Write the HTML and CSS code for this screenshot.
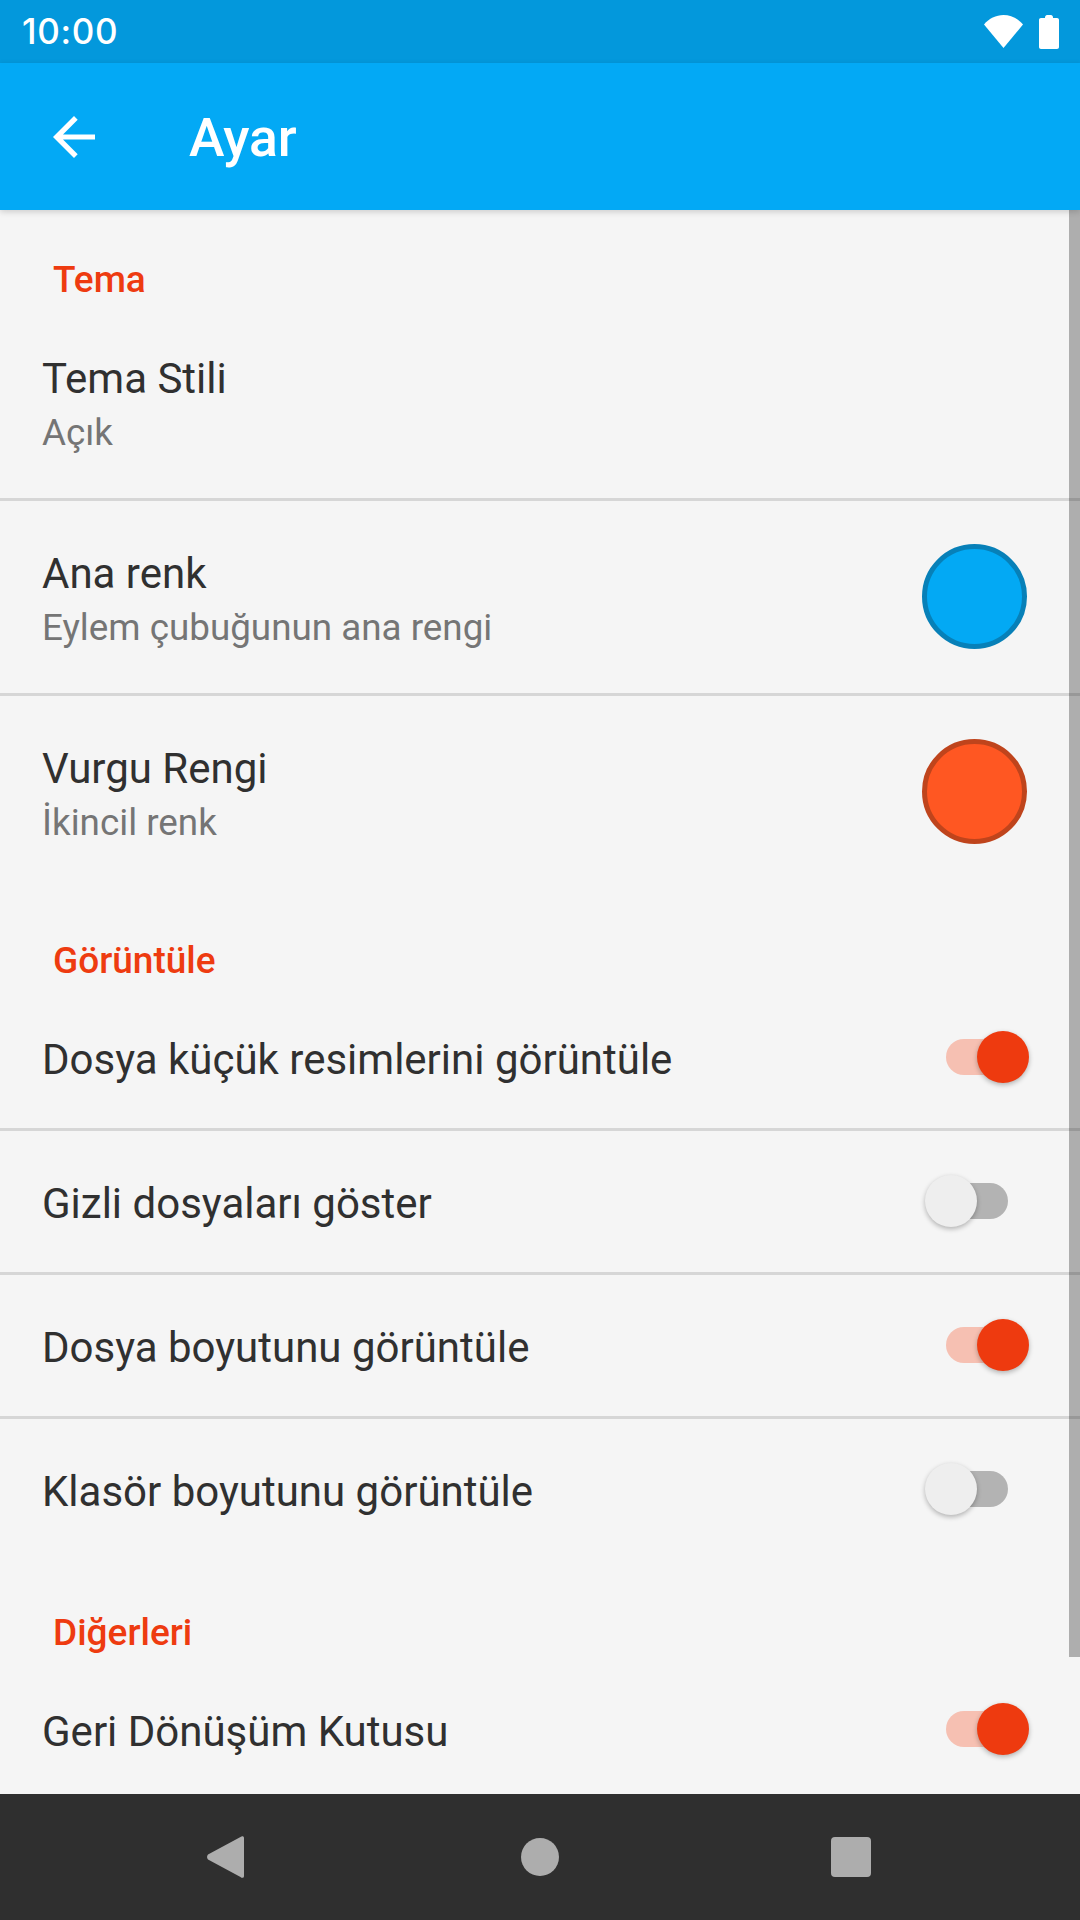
FILE: index.html
```html
<!DOCTYPE html>
<html lang="tr">
<head>
<meta charset="utf-8">
<title>Ayar</title>
<link rel="stylesheet" href="styles.css">
</head>
<body>
<div class="screen">
  <header class="status-bar">
    <span class="time">10:00</span>
    <div class="status-icons">
      <svg class="wifi" viewBox="0 0 39 33"><path d="M0 9.500C5 3.500 12 0 19.500 0S34 3.500 39 9.500L19.500 33Z"/></svg>
      <svg class="battery" viewBox="0 0 20 34"><path d="M6 2.500C6 1 7 0 8 0h4c1 0 2 1 2 2.500V3h4c1.200 0 2 .8 2 2v27c0 1.200-.8 2-2 2H2c-1.200 0-2-.8-2-2V5c0-1.200.8-2 2-2h4Z"/></svg>
    </div>
  </header>
  <div class="toolbar">
    <svg class="back-arrow" viewBox="0 0 42 42"><path d="M42 18.400H10L24.700 3.700 21 0 0 21l21 21 3.700-3.700L10 23.600h32Z"/></svg>
    <h1 class="title">Ayar</h1>
  </div>
  <main class="content">
    <h2 class="category">Tema</h2>
    <div class="row row-tall divided">
      <div class="texts"><div class="row-title">Tema Stili</div><div class="row-summary">Açık</div></div>
    </div>
    <div class="row row-tall divided">
      <div class="texts"><div class="row-title">Ana renk</div><div class="row-summary">Eylem çubuğunun ana rengi</div></div>
      <span class="swatch swatch-blue"></span>
    </div>
    <div class="row row-tall">
      <div class="texts"><div class="row-title">Vurgu Rengi</div><div class="row-summary">İkincil renk</div></div>
      <span class="swatch swatch-orange"></span>
    </div>

    <h2 class="category">Görüntüle</h2>
    <div class="row divided">
      <div class="row-title">Dosya küçük resimlerini görüntüle</div>
      <span class="switch on"><span class="track"></span><span class="thumb"></span></span>
    </div>
    <div class="row divided">
      <div class="row-title">Gizli dosyaları göster</div>
      <span class="switch"><span class="track"></span><span class="thumb"></span></span>
    </div>
    <div class="row divided">
      <div class="row-title">Dosya boyutunu görüntüle</div>
      <span class="switch on"><span class="track"></span><span class="thumb"></span></span>
    </div>
    <div class="row">
      <div class="row-title">Klasör boyutunu görüntüle</div>
      <span class="switch"><span class="track"></span><span class="thumb"></span></span>
    </div>

    <h2 class="category">Diğerleri</h2>
    <div class="row">
      <div class="row-title">Geri Dönüşüm Kutusu</div>
      <span class="switch on"><span class="track"></span><span class="thumb"></span></span>
    </div>
    <div class="scrollbar"></div>
  </main>
  <nav class="nav-bar">
    <svg class="nav-back" viewBox="0 0 37 42"><path d="M33.500 1C35 -.5 37 0 37 2v38c0 2-2 2.500-3.500 1L1 23.500c-1.300-1.500-1.300-3.500 0-5Z"/></svg>
    <span class="nav-home"></span>
    <span class="nav-recent"></span>
  </nav>
</div>
</body>
</html>
```

FILE: styles.css
```css
* { box-sizing: border-box; }
html, body { margin: 0; padding: 0; }
body { font-family: Roboto, "Noto Sans", sans-serif; background: #f5f5f5; }
.screen { width: 1080px; height: 1920px; display: flex; flex-direction: column; overflow: hidden; }

.status-bar { height: 63px; flex: none; background: #0398dc; color: #fff; display: flex; align-items: center; justify-content: space-between; padding: 0 21px 0 22px; }
.time { font-family: Inter, Roboto, sans-serif; font-size: 35px; font-weight: 500; letter-spacing: .7px; line-height: 63px; }
.status-icons { display: flex; gap: 16px; align-items: flex-start; }
.status-icons svg { fill: #fff; display: block; }
.wifi { width: 39px; height: 33px; }
.battery { width: 20px; height: 34px; }

.toolbar { height: 147px; flex: none; background: #03a9f5; display: flex; align-items: center; padding: 0 0 0 53px; position: relative; z-index: 2; box-shadow: 0 2px 6px rgba(0,0,0,.16); }
.back-arrow { width: 42px; height: 42px; fill: #fff; display: block; }
.title { margin: 2px 0 0 94px; font-size: 53.5px; font-weight: 500; color: #fff; line-height: 60px; }

.content { flex: 1; min-height: 0; position: relative; overflow: hidden; background: #f5f5f5; }
.category { margin: 0; height: 96px; padding: 52px 0 0 53px; font-size: 37px; line-height: 36px; font-weight: 500; color: #ee3b10; }
.row { height: 144px; display: flex; align-items: center; justify-content: space-between; padding: 0 53px 0 42px; border-bottom: 3px solid transparent; }
.row-tall { height: 195px; }
.divided { border-bottom-color: #d6d6d6; }
.row-title { font-size: 42px; line-height: 52px; padding-top: 5px; color: #303030; }
.row-summary { font-size: 36.8px; line-height: 48px; color: #757575; margin-top: 4px; }
.swatch { width: 105px; height: 105px; border-radius: 50%; border-width: 5px; border-style: solid; flex: none; margin-bottom: 2px; }
.swatch-blue { background: #03a9f4; border-color: #0780b8; }
.swatch-orange { background: #ff5722; border-color: #bf441c; }

.switch { width: 104px; height: 52px; position: relative; flex: none; margin: 0 -2px 1px 0; }
.track { position: absolute; left: 21px; top: 8px; width: 62px; height: 36px; border-radius: 18px; background: #b3b3b3; }
.thumb { position: absolute; left: 0; top: 0; width: 52px; height: 52px; border-radius: 50%; background: #eeeeee; box-shadow: 0 2px 5px rgba(0,0,0,.28); }
.switch.on .track { background: #f6c0b2; }
.switch.on .thumb { left: 52px; background: #ee3a0f; }

.scrollbar { position: absolute; right: 0; top: 0; width: 11px; height: 1447px; background: rgba(0,0,0,.29); }

.nav-bar { height: 126px; flex: none; background: #2f2f2f; position: relative; display: flex; align-items: center; }
.nav-back { position: absolute; left: 207px; top: 42px; width: 37px; height: 42px; fill: #adadad; }
.nav-home { position: absolute; left: 521px; top: 44px; width: 38px; height: 38px; border-radius: 50%; background: #adadad; }
.nav-recent { position: absolute; left: 831px; top: 43px; width: 40px; height: 40px; border-radius: 4px; background: #adadad; }
```
